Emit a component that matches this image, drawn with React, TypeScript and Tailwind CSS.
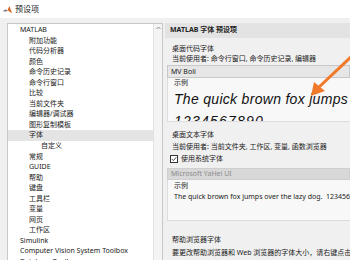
import React from "react";

const tree: { label: string; indent: number; selected?: boolean }[] = [
  { label: "MATLAB", indent: 0 },
  { label: "附加功能", indent: 1 },
  { label: "代码分析器", indent: 1 },
  { label: "颜色", indent: 1 },
  { label: "命令历史记录", indent: 1 },
  { label: "命令行窗口", indent: 1 },
  { label: "比较", indent: 1 },
  { label: "当前文件夹", indent: 1 },
  { label: "编辑器/调试器", indent: 1 },
  { label: "图形复制模板", indent: 1 },
  { label: "字体", indent: 1, selected: true },
  { label: "自定义", indent: 2 },
  { label: "常规", indent: 1 },
  { label: "GUIDE", indent: 1 },
  { label: "帮助", indent: 1 },
  { label: "键盘", indent: 1 },
  { label: "工具栏", indent: 1 },
  { label: "变量", indent: 1 },
  { label: "网页", indent: 1 },
  { label: "工作区", indent: 1 },
  { label: "Simulink", indent: 0 },
  { label: "Computer Vision System Toolbox", indent: 0 },
  { label: "Database Toolbox", indent: 0 },
];

const indentClass = ["pl-[12px]", "pl-[21px]", "pl-[33px]"];

function Logo() {
  return (
    <svg width="9" height="9" viewBox="0 0 10 10">
      <path d="M0 7 L3 5 L5 6 L7 1 L10 9 L8 8 L6 6 L4 7 Z" fill="#e06020" />
      <path d="M0 7 L3 5 L4 7 Z" fill="#3a7bc8" />
    </svg>
  );
}

export default function App() {
  return (
    <div
      className="w-[350px] h-[260px] overflow-hidden bg-[#f0f0f0] text-[7px] text-[#1a1a1a] relative"
      style={{ fontFamily: '"Noto Sans", "Noto Sans CJK SC", sans-serif' }}
    >
      {/* title bar */}
      <div className="h-[18px] bg-white flex items-center gap-[3px] pl-[3px]">
        <Logo />
        <span className="text-[8px] text-[#222]">预设项</span>
      </div>

      <div className="flex gap-[2px] pl-[7px] pt-[5px]">
        {/* tree */}
        <div className="w-[156px] shrink-0 h-[240px] bg-white border border-[#c8c8c8] flex overflow-hidden">
          <div className="flex-1 pt-[1px]">
            {tree.map((t) => (
              <div
                key={t.label}
                className={`h-[10.55px] leading-[10.55px] whitespace-nowrap ${indentClass[t.indent]} ${
                  t.selected ? "bg-[#e4e4e4]" : ""
                }`}
              >
                {t.label}
              </div>
            ))}
          </div>
          <div className="w-[9px] bg-[#f4f4f4] border-l border-[#e2e2e2] flex justify-center pt-[2px]">
            <svg width="5" height="4" viewBox="0 0 5 4">
              <path d="M0.5 3 L2.5 1 L4.5 3" stroke="#777" strokeWidth="0.8" fill="none" />
            </svg>
          </div>
        </div>

        {/* right panel */}
        <div className="flex-1 min-w-0 overflow-hidden flex flex-col">
          <div className="h-[15px] bg-[#e3e3e3] flex items-center pl-[5px] font-bold text-[#222]">
            MATLAB 字体 预设项
          </div>
          <div className="pl-[2px] flex flex-col">
            <div className="h-[6px]" />
            <div className="pl-[5px] h-[10px] leading-[10px]">桌面代码字体</div>
            <div className="pl-[5px] h-[10px] leading-[10px]">当前使用者: 命令行窗口, 命令历史记录, 编辑器</div>
            <div className="h-[13px] mt-[1px] bg-[#e6e6e6] border border-[#c8c8c8] pl-[3px] leading-[11px]">MV Boli</div>
            <div className="h-[44px] bg-[#f8f8f8] border-l border-b border-[#dcdcdc] overflow-hidden pl-[6px]">
              <div className="h-[10px] leading-[10px]">示例</div>
              <div
                className="italic text-[14px] leading-[23px] whitespace-nowrap text-[#111] tracking-[0.3px]"
                style={{ fontFamily: '"Liberation Sans", sans-serif' }}
              >
                The quick brown fox jumps
              </div>
              <div
                className="italic text-[14px] leading-[20px] whitespace-nowrap text-[#111] tracking-[1.2px]"
                style={{ fontFamily: '"Liberation Sans", sans-serif' }}
              >
                1234567890
              </div>
            </div>
            <div className="h-[7px]" />
            <div className="pl-[5px] h-[12px] leading-[12px]">桌面文本字体</div>
            <div className="pl-[5px] h-[12px] leading-[12px]">当前使用者: 当前文件夹, 工作区, 变量, 函数浏览器</div>
            <div className="pl-[3px] h-[12px] flex items-center gap-[3px]">
              <div className="w-[8px] h-[8px] border border-[#333] bg-white flex items-center justify-center">
                <svg width="6" height="6" viewBox="0 0 6 6">
                  <path d="M0.8 3 L2.4 4.6 L5.3 1.2" stroke="#222" strokeWidth="0.8" fill="none" />
                </svg>
              </div>
              <span>使用系统字体</span>
            </div>
            <div className="h-[12px] mt-[3px] bg-[#d8d8d8] border border-[#cfcfcf] pl-[3px] leading-[10px] text-[#8c8c8c]">
              Microsoft YaHei UI
            </div>
            <div className="h-[41px] bg-[#f8f8f8] border-l border-b border-[#dcdcdc] pl-[6px] overflow-hidden">
              <div className="h-[11px] leading-[11px]">示例</div>
              <div className="h-[11px] leading-[11px] whitespace-nowrap">
                The quick brown fox jumps over the lazy dog.&nbsp; 1234567890
              </div>
            </div>
            <div className="h-[12px]" />
            <div className="pl-[5px] h-[13px] leading-[13px]">帮助浏览器字体</div>
            <div className="pl-[5px] h-[13px] leading-[13px] whitespace-nowrap">
              要更改帮助浏览器和 Web 浏览器的字体大小，请右键点击页面
            </div>
          </div>
        </div>
      </div>

      {/* annotation arrow */}
      <svg className="absolute left-0 top-0" width="350" height="260" viewBox="0 0 350 260">
        <path d="M352 56 L318 88" stroke="#f07a2a" strokeWidth="3" strokeLinecap="round" />
        <path d="M311 96 L314 82 L325 91 Z" fill="#f07a2a" />
      </svg>
    </div>
  );
}
